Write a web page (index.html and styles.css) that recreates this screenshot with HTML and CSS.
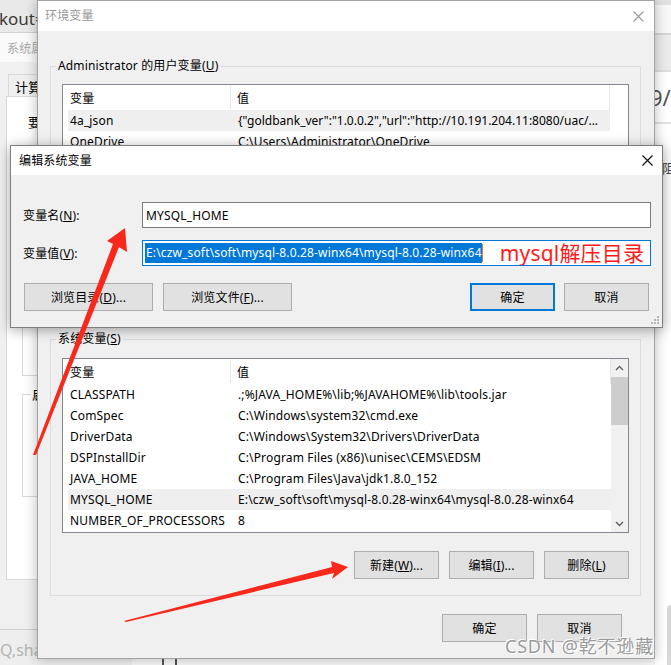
FILE: index.html
```html
<!DOCTYPE html>
<html>
<head>
<meta charset="utf-8">
<link rel="stylesheet" href="styles.css">
</head>
<body>
<div class="desk">
  <div class="bg">
    <div class="bg-main">
      <div class="bg-top"><span class="kout">kout=</span></div>
      <div class="bg-sub">系统属性</div>
      <div class="bg-body">
        <div class="tabs"><span class="tab">计算机名</span></div>
        <div class="panel">
          <p class="panel-line">要</p>
          <div class="pbox g1"></div>
          <fieldset class="pbox g2"><legend>启</legend></fieldset>
        </div>
      </div>
      <div class="bg-foot">
        <span class="foot-text">Q,sha</span>
        <span class="foot-light"><span class="sq"></span></span>
      </div>
    </div>
    <div class="bg-right">
      <div class="r1"></div>
      <div class="r2"></div>
      <div class="r3"></div>
      <div class="r4"></div>
      <div class="r5"></div>
      <div class="r6"><span class="date">9/1</span></div>
      <div class="r7"></div>
      <div class="r8"><span class="rch">阻</span><span class="rbar"></span></div>
    </div>
  </div>

  <div class="win env">
    <div class="titlebar env-title">
      <span class="title inactive">环境变量</span>
      <svg class="close" width="11" height="11" viewBox="0 0 11 11"><path d="M0.5 0.5L10.5 10.5M10.5 0.5L0.5 10.5" stroke="#9a9a9a" stroke-width="1.1" fill="none"/></svg>
    </div>
    <div class="env-body">
      <fieldset class="group ugroup">
        <legend>Administrator 的用户变量(<u>U</u>)</legend>
        <div class="list ulist">
          <div class="lv">
            <div class="lv-head"><span class="c1">变量</span><span class="c2">值</span></div>
            <div class="lv-row sel"><span class="c1">4a_json</span><span class="c2 tight">{"goldbank_ver":"1.0.0.2","url":"http://10.191.204.11:8080/uac/...</span></div>
            <div class="lv-row"><span class="c1">OneDrive</span><span class="c2">C:\Users\Administrator\OneDrive</span></div>
            <div class="lv-row"><span class="c1">Path</span><span class="c2">C:\Users\Administrator\AppData\Local\Microsoft\WindowsApps;</span></div>
            <div class="lv-row"><span class="c1">TEMP</span><span class="c2">C:\Users\Administrator\AppData\Local\Temp</span></div>
            <div class="lv-row"><span class="c1">TMP</span><span class="c2">C:\Users\Administrator\AppData\Local\Temp</span></div>
          </div>
          <div class="blank"></div>
        </div>
      </fieldset>

      <fieldset class="group sgroup">
        <legend>系统变量(<u>S</u>)</legend>
        <div class="list slist">
          <div class="lv">
            <div class="lv-head"><span class="c1">变量</span><span class="c2">值</span></div>
            <div class="lv-row"><span class="c1">CLASSPATH</span><span class="c2">.;%JAVA_HOME%\lib;%JAVAHOME%\lib\tools.jar</span></div>
            <div class="lv-row"><span class="c1">ComSpec</span><span class="c2">C:\Windows\system32\cmd.exe</span></div>
            <div class="lv-row"><span class="c1">DriverData</span><span class="c2">C:\Windows\System32\Drivers\DriverData</span></div>
            <div class="lv-row"><span class="c1">DSPInstallDir</span><span class="c2">C:\Program Files (x86)\unisec\CEMS\EDSM</span></div>
            <div class="lv-row"><span class="c1">JAVA_HOME</span><span class="c2">C:\Program Files\Java\jdk1.8.0_152</span></div>
            <div class="lv-row sel"><span class="c1">MYSQL_HOME</span><span class="c2">E:\czw_soft\soft\mysql-8.0.28-winx64\mysql-8.0.28-winx64</span></div>
            <div class="lv-row"><span class="c1">NUMBER_OF_PROCESSORS</span><span class="c2">8</span></div>
          </div>
          <div class="scroll">
            <div class="sbtn"><svg width="9" height="6" viewBox="0 0 9 6"><path d="M1 5L4.5 1.5L8 5" stroke="#606060" stroke-width="1.4" fill="none"/></svg></div>
            <div class="thumb"></div>
            <div class="strack"></div>
            <div class="sbtn"><svg width="9" height="6" viewBox="0 0 9 6"><path d="M1 1L4.5 4.5L8 1" stroke="#606060" stroke-width="1.4" fill="none"/></svg></div>
          </div>
        </div>
        <div class="btnrow">
          <button class="btn">新建(<u>W</u>)...</button>
          <button class="btn">编辑(<u>I</u>)...</button>
          <button class="btn">删除(<u>L</u>)</button>
        </div>
      </fieldset>

      <div class="btnrow dlgbtns">
        <button class="btn">确定</button>
        <button class="btn">取消</button>
      </div>
    </div>
  </div>

  <div class="win edit">
    <div class="titlebar edit-title">
      <span class="title">编辑系统变量</span>
      <svg class="close" width="11" height="11" viewBox="0 0 11 11"><path d="M0.5 0.5L10.5 10.5M10.5 0.5L0.5 10.5" stroke="#111" stroke-width="1.2" fill="none"/></svg>
    </div>
    <div class="edit-body">
      <div class="frow">
        <label class="flabel">变量名(<u>N</u>):</label>
        <div class="field">MYSQL_HOME</div>
      </div>
      <div class="frow">
        <label class="flabel">变量值(<u>V</u>):</label>
        <div class="field focus"><span class="selected">E:\czw_soft\soft\mysql-8.0.28-winx64\mysql-8.0.28-winx64</span><span class="caret"></span><span class="note">mysql解压目录</span></div>
      </div>
      <div class="ebtns">
        <div class="eleft">
          <button class="btn wide">浏览目录(<u>D</u>)...</button>
          <button class="btn wide">浏览文件(<u>F</u>)...</button>
        </div>
        <div class="eright">
          <button class="btn default">确定</button>
          <button class="btn">取消</button>
        </div>
      </div>
    </div>
    <svg class="grip" width="9" height="9" viewBox="0 0 9 9">
      <rect x="6" y="0" width="2" height="2" fill="#b8b8b8"/>
      <rect x="3" y="3" width="2" height="2" fill="#b8b8b8"/>
      <rect x="6" y="3" width="2" height="2" fill="#b8b8b8"/>
      <rect x="0" y="6" width="2" height="2" fill="#b8b8b8"/>
      <rect x="3" y="6" width="2" height="2" fill="#b8b8b8"/>
      <rect x="6" y="6" width="2" height="2" fill="#b8b8b8"/>
    </svg>
  </div>

  <svg class="arrows" width="671" height="665" viewBox="0 0 671 665">
    <polygon points="125,228 107,241 113,244 33,455 36,455 119,247 127,252" fill="#f8281c"/>
    <polygon points="348,567 331,561 332,567 124,621 126,622 334,573 332,579" fill="#f8281c"/>
  </svg>

  <div class="watermark">CSDN @乾不逊藏</div>
</div>
</body>
</html>
```

FILE: styles.css
```css
* { box-sizing: border-box; margin: 0; padding: 0; }
html, body { width: 671px; height: 665px; overflow: hidden; }
body {
  font-family: "Noto Sans", "Noto Sans CJK SC", sans-serif;
  font-size: 12px;
  letter-spacing: 0.15px;
  color: #000;
  background: #f0f0f0;
}
u { text-decoration: underline; text-underline-offset: 1px; }

.desk { position: relative; width: 671px; height: 665px; overflow: hidden; }

/* ---------- background windows ---------- */
.bg { display: flex; height: 665px; }
.bg-main { flex: 1; display: flex; flex-direction: column; }
.bg-top {
  height: 33px; background: #e9e9e9; border-bottom: 1px solid #d2d2d2;
  display: flex; align-items: center; padding-top: 4px;
}
.kout { font-size: 17px; color: #3a3a3a; margin-left: -1px; letter-spacing: 0; }
.bg-sub {
  height: 29px; background: #fafafa; color: #a8a8a8;
  display: flex; align-items: center; padding-left: 7px;
}
.bg-body {
  flex: 1; background: #f0f0f0; padding: 12px 0 49px 6px;
  display: flex; flex-direction: column;
}
.tabs { display: flex; padding-left: 2px; }
.tab {
  height: 23px; padding: 0 6px; border: 1px solid #d9d9d9; border-bottom: none;
  background: #f0f0f0; display: flex; align-items: center; font-size: 13px;
}
.panel {
  flex: 1; margin-top: -1px; background: #fff; border: 1px solid #d9d9d9;
  padding: 17px 0 0 15px;
}
.panel-line { margin-left: 6px; line-height: 16px; font-size: 13px; }
.pbox { border: 1px solid #d9d9d9; }
.g1 { margin-top: 70px; height: 176px; }
.g2 { margin-top: 10px; height: 111px; padding-left: 8px; }
.g2 legend { padding: 0 1px; line-height: 16px; font-size: 13px; }
.bg-foot {
  height: 36px; background: #eeeeee; border-top: 1px solid #cfcfcf;
  display: flex; align-items: center;
}
.foot-text { width: 132px; color: #b4b4b4; font-size: 16px; padding-top: 4px; letter-spacing: 0; }
.foot-light { flex: 1; align-self: stretch; background: #f8f8f8; padding: 25px 0 0 30px; }
.sq { display: block; width: 15px; height: 14px; border: 2px solid #555; }

.bg-right { width: 16px; display: flex; flex-direction: column; background: #fff; }
.r1 { height: 5px; background: #e2e2e2; }
.r2 { height: 28px; background: #f7f7f7; }
.r3 { height: 2px; background: #d6d6d6; }
.r4 { height: 35px; background: #ebebeb; }
.r5 { height: 2px; background: #dedede; }
.r6 { height: 50px; background: #fff; display: flex; align-items: center; overflow: visible; }
.date { font-size: 22px; color: #555; margin-left: -5px; white-space: nowrap; letter-spacing: 0; }
.r7 { height: 2px; background: #e2e2e2; }
.r8 { flex: 1; background: #fff; padding-top: 34px; position: relative; overflow: hidden; }
.rch { display: block; margin-left: 7px; font-size: 13px; color: #444; white-space: nowrap; }
.rbar {
  position: absolute; right: -4px; bottom: -6px; width: 8px; height: 66px;
  border-radius: 4px; background: #d8d8d8;
}

/* ---------- windows ---------- */
.win { position: absolute; background: #f0f0f0; }
.titlebar {
  background: #fff; display: flex; align-items: center; justify-content: space-between;
}
.title { line-height: 16px; }
.inactive { color: #999; }

.env {
  left: 37px; top: 0; width: 618px; height: 659px;
  border: 1px solid #a3a3a3;
  box-shadow: 0 0 12px rgba(0, 0, 0, 0.28);
}
.env-title { height: 30px; padding: 0 10px 0 7px; }
.env-body { padding: 27px 13px 0 12px; display: flex; flex-direction: column; }

.group {
  border: 1px solid #dcdcdc; padding: 10px 11px 13px 11px;
}
.group legend {
  line-height: 16px; padding: 0 2px; margin-left: -6px;
}
.ugroup { height: 261px; }
.sgroup { margin-top: 12px; padding-top: 11px; padding-bottom: 16px; }

.list {
  display: flex; background: #fff; border: 1px solid #828790; overflow: hidden;
}
.ulist { height: 220px; }
.slist { height: 175px; }
.lv { flex: 1; min-width: 0; overflow: hidden; }
.blank { width: 18px; }
.lv-head {
  display: flex; height: 25px; align-items: center; padding-left: 5px;
  border-right: 1px solid #e5e5e5;
}
.lv-head .c1 {
  width: 163px; padding-left: 2px; align-self: stretch; display: flex; align-items: center;
  border-right: 1px solid #e5e5e5; margin: 1px 0 1px 0;
}
.lv-head .c2 { padding-left: 6px; }
.lv-row {
  display: flex; height: 21px; align-items: center; margin-left: 5px; white-space: nowrap;
}
.lv-row.sel { background: #efefef; }
.lv-row .c1 { width: 163px; flex: none; padding-left: 2px; }
.lv-row .c2 { padding-left: 7px; overflow: hidden; }
.lv-row .c2.tight { letter-spacing: 0; }

.scroll { width: 17px; background: #f0f0f0; display: flex; flex-direction: column; }
.sbtn { height: 17px; display: flex; align-items: center; justify-content: center; }
.thumb { height: 48px; background: #cdcdcd; margin: 1px 0 0 0; }
.strack { flex: 1; }

.btnrow { display: flex; justify-content: flex-end; gap: 10px; margin-top: 18px; }
.btn {
  width: 85px; height: 28px; background: #e1e1e1; border: 1px solid #adadad;
  font: inherit; letter-spacing: inherit; color: #000;
  display: flex; align-items: center; justify-content: center;
}
.dlgbtns { margin-top: 18px; padding-right: 19px; }

.edit {
  left: 10px; top: 145px; width: 653px; height: 183px;
  border: 1px solid #7f7f7f;
  box-shadow: 0 2px 12px rgba(0, 0, 0, 0.35);
}
.edit-title { height: 29px; padding: 0 9px 0 8px; }
.edit-body { padding: 27px 11px 0 12px; display: flex; flex-direction: column; gap: 12px; }
.frow { display: flex; align-items: center; }
.flabel { width: 119px; flex: none; }
.field {
  flex: 1; height: 26px; background: #fff; border: 1px solid #7a7a7a;
  display: flex; align-items: center; padding-left: 3px; white-space: nowrap; overflow: hidden;
}
.field.focus { border-color: #0078d7; padding-left: 2px; }
.selected { background: #0078d7; color: #fff; line-height: 20px; padding-left: 1px; }
.caret { width: 1px; height: 18px; background: #e07a30; }
.note { color: #ff1a1a; font-size: 21px; line-height: 24px; margin-left: 17px; letter-spacing: 0.2px; }

.ebtns { display: flex; justify-content: space-between; margin-top: 5px; padding-right: 2px; }
.eleft { display: flex; gap: 10px; padding-left: 1px; }
.eright { display: flex; gap: 9px; }
.btn.wide { width: 129px; }
.btn.default { border: 2px solid #0078d7; }
.grip { position: absolute; right: 2px; bottom: 2px; }

/* ---------- overlays ---------- */
.arrows { position: absolute; left: 0; top: 0; pointer-events: none; }
.watermark {
  position: absolute; left: 505px; top: 632px;
  font-size: 18px; color: #9a9a9a; letter-spacing: 0.8px;
  text-shadow: 1px 1px 0 #fff, -1px -1px 0 #fff;
  white-space: nowrap;
}
```
